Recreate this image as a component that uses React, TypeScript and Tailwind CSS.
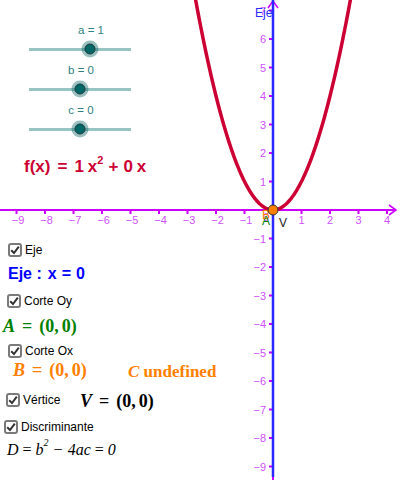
import React from "react";

const S = 28.5;
const OX = 273;
const OY = 210;

const AXIS = "#cc00ff";
const TICK_LABEL = "#d050ff";
const LINE_BLUE = "#2a2aff";
const CURVE = "#cc0033";

const SLIDERS = [
  { name: "a", value: 1 },
  { name: "b", value: 0 },
  { name: "c", value: 0 },
];

function parabolaPath() {
  const pts: string[] = [];
  for (let t = -2.8; t <= 2.801; t += 0.04) {
    const px = OX + t * S;
    const py = OY - t * t * S;
    pts.push(`${pts.length ? "L" : "M"}${px.toFixed(2)} ${py.toFixed(2)}`);
  }
  return pts.join(" ");
}

function Graph() {
  const xs = [-9, -8, -7, -6, -5, -4, -3, -2, -1, 1, 2, 3, 4];
  const ys = [-9, -8, -7, -6, -5, -4, -3, -2, -1, 1, 2, 3, 4, 5, 6, 7];
  return (
    <svg className="absolute inset-0" width="400" height="480" viewBox="0 0 400 480">
      {/* x axis */}
      <line x1="0" y1={OY} x2="396" y2={OY} stroke={AXIS} strokeWidth="2" />
      <polyline points={`389,${OY - 5} 396,${OY} 389,${OY + 5}`} fill="none" stroke={AXIS} strokeWidth="1.6" />
      {xs.map((k) => {
        const x = OX + k * S;
        return (
          <g key={"x" + k}>
            <line x1={x} y1={OY} x2={x} y2={OY + 4} stroke={AXIS} strokeWidth="2" />
            <text
              x={x + (k < 0 ? 1.5 : 0)}
              y={OY + 14}
              textAnchor="middle"
              fontSize="11"
              fontFamily="'Liberation Sans', Arial, sans-serif"
              fill={TICK_LABEL}
            >
              {k < 0 ? "\u2212" + -k : k}
            </text>
          </g>
        );
      })}
      {/* y axis */}
      <line x1={OX} y1="1" x2={OX} y2="480" stroke={AXIS} strokeWidth="2" />
      <polyline points={`${OX - 5},8 ${OX},1 ${OX + 5},8`} fill="none" stroke={AXIS} strokeWidth="1.6" />
      {ys.map((k) => {
        const y = OY - k * S;
        return (
          <g key={"y" + k}>
            <line x1={OX - 4} y1={y} x2={OX} y2={y} stroke={AXIS} strokeWidth="2" />
            <text
              x={OX - 7}
              y={y + 4}
              textAnchor="end"
              fontSize="11"
              fontFamily="'Liberation Sans', Arial, sans-serif"
              fill={TICK_LABEL}
            >
              {k < 0 ? "\u2212" + -k : k}
            </text>
          </g>
        );
      })}
      <text x={OX - 10} y={OY + 11} fontSize="11" fontFamily="'Liberation Sans', Arial, sans-serif" fill={TICK_LABEL}>
        0
      </text>
      {/* line x = 0 */}
      <line x1={OX} y1="0" x2={OX} y2="477" stroke={LINE_BLUE} strokeWidth="2.5" />
      <text x="255" y="17" fontSize="12" fontFamily="'Liberation Sans', Arial, sans-serif" fill={LINE_BLUE}>
        Eje
      </text>
      {/* f(x) */}
      <path d={parabolaPath()} fill="none" stroke={CURVE} strokeWidth="3.5" strokeLinejoin="round" />
      {/* points */}
      <text x="262" y="219" fontSize="12" fontFamily="'Liberation Sans', Arial, sans-serif" fill="#ff7f00">
        B
      </text>
      <text x="262" y="225" fontSize="12" fontFamily="'Liberation Sans', Arial, sans-serif" fill="#008000">
        A
      </text>
      <text x="279" y="227" fontSize="12" fontFamily="'Liberation Sans', Arial, sans-serif" fill="#222">
        V
      </text>
      <circle cx={OX} cy={OY} r="5" fill="#ff7f00" stroke="#333" strokeWidth="1" />
    </svg>
  );
}

function Slider({ name, value }: { name: string; value: number }) {
  const knob = 51 + value * 10;
  return (
    <div className="flex flex-col h-[40px]">
      <div className="relative h-[18px]">
        <span
          className="absolute top-0 -translate-x-1/2 text-[11.5px] leading-[18px] text-[#2f7f7f] whitespace-nowrap"
          style={{ left: 29 + knob + 1 }}
        >
          {name} = {value}
        </span>
      </div>
      <div className="h-[20px] flex items-center pl-[29px]">
        <div className="relative w-[102px] h-[3px] bg-[#99c4c4]">
          <div
            className="absolute top-1/2 -translate-x-1/2 -translate-y-1/2 w-[17px] h-[17px] rounded-full bg-[#005f5f]/40 flex items-center justify-center"
            style={{ left: knob }}
          >
            <div className="w-[11px] h-[11px] rounded-full bg-[#006666] border border-[#1c3a3a]" />
          </div>
        </div>
      </div>
    </div>
  );
}

function CheckBox({ label }: { label: string }) {
  return (
    <div className="flex items-center gap-[3px]">
      <div className="w-[14px] h-[14px] border-2 border-[#7a7a7a] rounded-[3px] bg-white flex items-center justify-center">
        <svg width="10" height="10" viewBox="0 0 10 10">
          <path d="M1.2 5.2 L4 8 L8.8 1.6" fill="none" stroke="#333" strokeWidth="2" />
        </svg>
      </div>
      <span className="text-[12px] text-black leading-none">{label}</span>
    </div>
  );
}

function Pt({ name, color, className = "" }: { name: string; color: string; className?: string }) {
  return (
    <span
      className={`font-bold text-[18px] leading-none whitespace-nowrap ${className}`}
      style={{ color, fontFamily: "'Liberation Serif', 'Times New Roman', serif" }}
    >
      <i>{name}</i>
      <span className="mx-[7px]">=</span>
      <span>
        (0,<span className="ml-[3px]">0)</span>
      </span>
    </span>
  );
}

export default function App() {
  return (
    <div className="relative w-[400px] h-[480px] bg-white overflow-hidden font-['Liberation_Sans',Arial,sans-serif]">
      <Graph />

      <div className="absolute left-0 top-[21px] flex flex-col">
        {SLIDERS.map((s) => (
          <Slider key={s.name} name={s.name} value={s.value} />
        ))}
        <div className="mt-[13px] h-[26px] flex items-center pl-[24px] text-[17px] font-bold text-[#cc0033] whitespace-nowrap">
          f(x)<span className="mx-[7px]">=</span>1<span className="ml-[4px]">x</span>
          <sup className="text-[11px] -top-[0.6em]">2</sup>
          <span className="mx-[5px]">+</span>0<span className="ml-[4px]">x</span>
        </div>
      </div>

      <div className="absolute left-0 top-[240px] flex flex-col">
        <div className="h-[20px] flex items-center pl-[8px]">
          <CheckBox label="Eje" />
        </div>
        <div className="h-[28px] flex items-center pl-[8px] text-[16px] font-bold text-[#0000ff] whitespace-nowrap">
          Eje :<span className="ml-[6px]">x</span>
          <span className="mx-[5px]">=</span>0
        </div>
        <div className="h-[26px] flex items-center pl-[7px]">
          <CheckBox label="Corte Oy" />
        </div>
        <div className="h-[24px] flex items-center pl-[3px]">
          <Pt name="A" color="#008000" />
        </div>
        <div className="h-[26px] flex items-center pl-[8px]">
          <CheckBox label="Corte Ox" />
        </div>
        <div className="h-[14px] flex items-center pl-[13px]">
          <div className="w-[115px]">
            <Pt name="B" color="#ff7f00" />
          </div>
          <span
            className="font-bold text-[17px] leading-none text-[#ff7f00] whitespace-nowrap"
            style={{ fontFamily: "'Liberation Serif', 'Times New Roman', serif" }}
          >
            <i>C</i> undefined
          </span>
        </div>
        <div className="h-[44px] flex items-center pl-[6px]">
          <div className="w-[74px]">
            <CheckBox label="Vértice" />
          </div>
          <div className="pt-[4px]">
            <Pt name="V" color="#000000" />
          </div>
        </div>
        <div className="h-[10px] flex items-center pl-[4px]">
          <CheckBox label="Discriminante" />
        </div>
        <div
          className="h-[36px] flex items-center pl-[7px] text-[16px] italic text-black whitespace-nowrap"
          style={{ fontFamily: "'Liberation Serif', 'Times New Roman', serif" }}
        >
          D<span className="mx-[4px] not-italic">=</span>b<sup className="text-[10px] -top-[0.7em]">2</sup>
          <span className="mx-[5px] not-italic">−</span>4ac<span className="mx-[4px] not-italic">=</span>0
        </div>
      </div>
    </div>
  );
}
